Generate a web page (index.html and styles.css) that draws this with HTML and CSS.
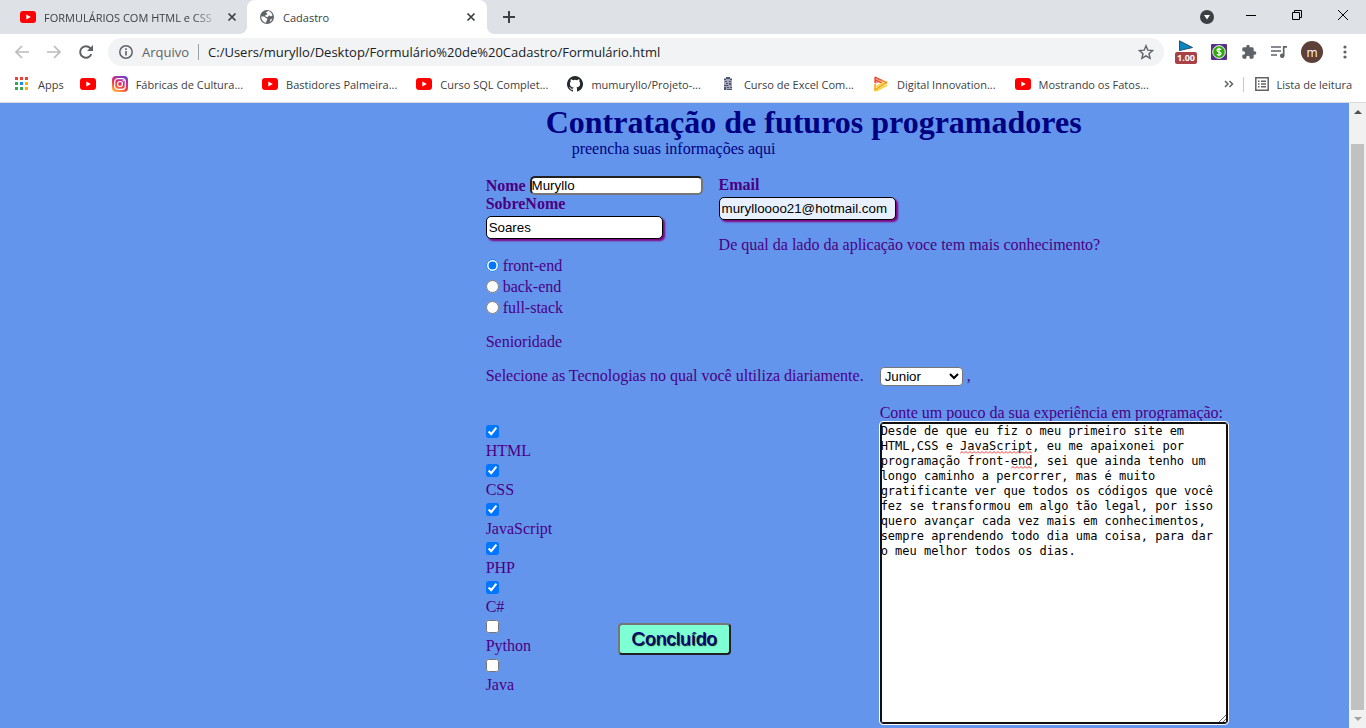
FILE: index.html
```html
<!DOCTYPE html>
<html lang="pt-BR">
<head>
<meta charset="utf-8">
<title>Cadastro</title>
<link rel="stylesheet" href="styles.css">
</head>
<body>
<svg class="defs" aria-hidden="true">
  <symbol id="youtube" viewBox="0 0 16 16"><rect y="2" width="16" height="12" rx="3" fill="#f00"/><path d="M6.3 5.4v5.2L10.8 8z" fill="#fff"/></symbol>
  <symbol id="cross" viewBox="0 0 10 10"><path d="M1.5 1.5l7 7m0-7l-7 7" stroke="#3c4043" stroke-width="1.7" fill="none"/></symbol>
</svg>

<header class="browser">
  <div class="tabbar">
    <div class="tab">
      <svg class="icon"><use href="#youtube"/></svg>
      <span class="tab-title faded">FORMULÁRIOS COM HTML e CSS</span>
      <button class="plain" aria-label="Fechar guia"><svg class="close"><use href="#cross"/></svg></button>
    </div>
    <div class="tab active">
      <svg class="icon" viewBox="0 0 16 16"><circle cx="8" cy="8" r="7" fill="#5f6368"/><path d="M2.2 7.4l3 .2 2 1.6 1 .2v1.8l-1 .9v1.6C4.500 13.300 2.300 11 2.200 7.400zM7 3.200l2.300-1.100c2 .5 3.600 2 4.200 4.100L12 7.400l-1.300-.8-1.200.5-.7 1.200-2.300-.8-.3-1.300 2.200-.6zM13.500 9.500c-.5 1.500-1.400 2.700-2.700 3.400l.3-2.200z" fill="#fff"/></svg>
      <span class="tab-title">Cadastro</span>
      <button class="plain" aria-label="Fechar guia"><svg class="close"><use href="#cross"/></svg></button>
    </div>
    <button class="plain new-tab" aria-label="Nova guia"><svg width="12" height="12" viewBox="0 0 12 12"><path d="M6 0v12M0 6h12" stroke="#3c4043" stroke-width="2"/></svg></button>
    <button class="plain tab-search" aria-label="Pesquisar guias"><svg width="14" height="14" viewBox="0 0 14 14"><circle cx="7" cy="7" r="7" fill="#3c4043"/><path d="M4 5h6L7 9.500z" fill="#fff"/></svg></button>
    <div class="window-controls">
      <button class="plain" aria-label="Minimizar"><svg width="10" height="12" viewBox="0 0 10 12"><path d="M0 6.500h10" stroke="#000"/></svg></button>
      <button class="plain" aria-label="Restaurar"><svg width="10" height="12" viewBox="0 0 10 12"><path d="M.5 3.500h7v7h-7zM2.500 3V1.500h7v7H8" fill="none" stroke="#000"/></svg></button>
      <button class="plain" aria-label="Fechar"><svg width="10" height="12" viewBox="0 0 10 12"><path d="M0 1l10 10M10 1L0 11" stroke="#000"/></svg></button>
    </div>
  </div>

  <div class="toolbar">
    <div class="nav">
      <button class="plain" aria-label="Voltar"><svg width="16" height="16" viewBox="0 0 16 16"><path d="M15 8H2M8 2L2 8l6 6" fill="none" stroke="#babcbe" stroke-width="1.700"/></svg></button>
      <button class="plain" aria-label="Avançar"><svg width="16" height="16" viewBox="0 0 16 16"><path d="M1 8h13M8 2l6 6-6 6" fill="none" stroke="#babcbe" stroke-width="1.700"/></svg></button>
      <button class="plain" aria-label="Recarregar"><svg width="16" height="16" viewBox="0 0 16 16"><path d="M13.300 10.200A5.800 5.800 0 1 1 12.200 4l1 1" fill="none" stroke="#5f6368" stroke-width="2"/><path d="M15 1v6H9z" fill="#5f6368"/></svg></button>
    </div>
    <div class="omnibox">
      <svg width="14" height="14" viewBox="0 0 14 14"><circle cx="7" cy="7" r="6.200" fill="none" stroke="#5f6368" stroke-width="1.500"/><path d="M7 6v4.500M7 3.300v1.600" stroke="#5f6368" stroke-width="1.600"/></svg>
      <label class="scheme" for="url">Arquivo</label>
      <input id="url" class="url" type="text" value="C:/Users/muryllo/Desktop/Formulário%20de%20Cadastro/Formulário.html">
      <button class="plain" aria-label="Favoritar"><svg width="16" height="16" viewBox="0 0 16 16"><path d="M8 1.800l1.800 4.400 4.800.4-3.600 3.100 1.100 4.600L8 11.800l-4.100 2.500L5 9.700 1.400 6.600l4.800-.4z" fill="none" stroke="#5f6368" stroke-width="1.400"/></svg></button>
    </div>
    <div class="extensions">
      <button class="plain speed" aria-label="Velocidade"><svg width="16" height="12" viewBox="0 0 16 12"><path d="M1.500.8v9.700l13-3z" fill="#0b86c1" stroke="#25516d"/></svg><span class="speed-badge">1.00</span></button>
      <button class="plain" aria-label="Cupons"><svg width="16" height="16" viewBox="0 0 16 16"><rect width="16" height="16" rx="1" fill="#55318a"/><circle cx="8" cy="8" r="6.300" fill="#31a80c" stroke="#fff"/><path d="M10 5.700C9.500 4.500 6 4.400 6 6.300c0 2 4 1.200 4 3.200 0 2-3.500 1.900-4 .6M8 3.700v8.600" fill="none" stroke="#fff" stroke-width="1.200"/></svg></button>
      <button class="plain" aria-label="Extensões"><svg width="16" height="16" viewBox="0 0 24 24"><path d="M20.500 11H19V7a2 2 0 0 0-2-2h-4V3.500a2.500 2.500 0 0 0-5 0V5H4a2 2 0 0 0-2 2v3.800h1.500a2.700 2.700 0 0 1 0 5.400H2V20a2 2 0 0 0 2 2h3.800v-1.500a2.700 2.700 0 0 1 5.400 0V22H17a2 2 0 0 0 2-2v-4h1.500a2.500 2.500 0 0 0 0-5z" fill="#5f6368"/></svg></button>
      <button class="plain" aria-label="Mídia"><svg width="16" height="14" viewBox="0 0 16 14"><path d="M0 2h10M0 6h10M0 10h6" stroke="#5f6368" stroke-width="1.700"/><path d="M12.700 10.500V1.800H16" fill="none" stroke="#5f6368" stroke-width="1.700"/><circle cx="11.200" cy="10.700" r="2.300" fill="#5f6368"/></svg></button>
      <button class="plain avatar" aria-label="Perfil">m</button>
      <button class="plain menu" aria-label="Menu"><svg width="4" height="14" viewBox="0 0 4 14"><g fill="#5f6368"><circle cx="2" cy="2" r="1.600"/><circle cx="2" cy="7" r="1.600"/><circle cx="2" cy="12" r="1.600"/></g></svg></button>
    </div>
  </div>

  <nav class="bookmarks">
    <a class="bookmark" href="#"><svg class="icon" viewBox="0 0 16 16"><path d="M1 1h3v3H1zM6 1h3v3H6zM11 1h3v3h-3z" fill="#ea4335"/><path d="M1 6h3v3H1zM1 11h3v3H1z" fill="#34a853"/><path d="M6 6h3v3H6z" fill="#1a8cf0"/><path d="M11 6h3v3h-3zM11 11h3v3h-3z" fill="#fbae05"/><path d="M6 11h3v3H6z" fill="#34a853"/></svg>Apps</a>
    <a class="bookmark" href="#" aria-label="YouTube"><svg class="icon"><use href="#youtube"/></svg></a>
    <a class="bookmark long" href="#"><svg class="icon" viewBox="0 0 16 16"><defs><linearGradient id="ig" x1=".2" y1="1" x2=".7" y2="0"><stop offset="0" stop-color="#fdc04a"/><stop offset=".4" stop-color="#f0433f"/><stop offset=".7" stop-color="#c32d92"/><stop offset="1" stop-color="#6a45cb"/></linearGradient></defs><rect width="16" height="16" rx="4" fill="url(#ig)"/><rect x="2.700" y="2.700" width="10.600" height="10.600" rx="3" fill="none" stroke="#fff" stroke-width="1.200"/><circle cx="8" cy="8" r="2.500" fill="none" stroke="#fff" stroke-width="1.200"/><circle cx="11.200" cy="4.800" r=".7" fill="#fff"/></svg>Fábricas de Cultura...</a>
    <a class="bookmark long" href="#"><svg class="icon"><use href="#youtube"/></svg>Bastidores Palmeira...</a>
    <a class="bookmark long" href="#"><svg class="icon"><use href="#youtube"/></svg>Curso SQL Complet...</a>
    <a class="bookmark long" href="#"><svg class="icon" viewBox="0 0 16 16"><path d="M8 0a8 8 0 0 0-2.530 15.590c.4.070.55-.17.55-.38v-1.490c-2.230.48-2.690-.95-2.690-.95-.36-.92-.89-1.170-.89-1.170-.73-.5.060-.49.060-.49.800.060 1.230.83 1.230.83.710 1.220 1.870.87 2.330.66.070-.52.280-.87.500-1.070-1.770-.2-3.640-.89-3.640-3.950 0-.87.310-1.590.82-2.150-.08-.2-.36-1.020.080-2.120 0 0 .67-.21 2.200.82a7.600 7.600 0 0 1 4 0c1.530-1.040 2.200-.82 2.200-.82.440 1.100.16 1.920.080 2.120.51.560.82 1.270.82 2.150 0 3.070-1.870 3.750-3.650 3.950.29.250.54.730.54 1.480v2.200c0 .21.150.46.550.38A8 8 0 0 0 8 0z" fill="#24292e"/></svg>mumuryllo/Projeto-...</a>
    <a class="bookmark long" href="#"><svg class="icon" viewBox="0 0 16 16"><path d="M4 2h8v12H4z" fill="#a2a8b9"/><path d="M6 1h4v2H6zM4 3h2v1H4zM10 3h2v1h-2zM5 5h2v1H5zM9 5h2v1H9zM6 7h2v1H6zM9 7h2v2H9zM4 9h4v1H4zM4 11h2v3H4zM7 11h2v1H7zM10 11h2v1h-2zM7 13h5v1H7z" fill="#4c5470"/></svg>Curso de Excel Com...</a>
    <a class="bookmark long" href="#"><svg class="icon" viewBox="0 0 16 16"><path d="M2 1l8 4-8 3z" fill="#f6a08c"/><path d="M2 1l8 4M2 4l7 3M2 7V1" stroke="#e4452f" stroke-width="1.300"/><path d="M14 6L2 14V8" fill="none" stroke="#f5a623" stroke-width="1.600"/><path d="M14 9L3 15M10 7L3 11" stroke="#fbd238" stroke-width="1.700"/><path d="M8 4l6 3" stroke="#f08a2c" stroke-width="1.500"/></svg>Digital Innovation...</a>
    <a class="bookmark long" href="#"><svg class="icon"><use href="#youtube"/></svg>Mostrando os Fatos...</a>
    <div class="bookmarks-end">
      <button class="plain" aria-label="Mais favoritos"><svg width="10" height="8" viewBox="0 0 10 8"><path d="M1 1l3 3-3 3M5.500 1l3 3-3 3" fill="none" stroke="#5f6368" stroke-width="1.500"/></svg></button>
      <a class="bookmark reading" href="#"><svg width="14" height="14" viewBox="0 0 14 14"><path d="M.8.8h12.400v12.400H.8z" fill="none" stroke="#5f6368" stroke-width="1.500"/><path d="M3 4.200h1.500M3 7h1.500M3 9.800h1.500M6 4.200h5M6 7h5M6 9.800h5" stroke="#5f6368" stroke-width="1.400"/></svg>Lista de leitura</a>
    </div>
  </nav>
</header>

<div class="viewport">
  <main class="page">
    <form class="form">
      <div class="heading">
        <h1>Contratação de futuros programadores</h1>
        <p class="subtitle">preencha suas informações aqui</p>
      </div>

      <div class="identity">
        <div>
          <div class="inline-field"><label for="nome"><b>Nome</b></label><input id="nome" class="first-name" type="text" value="Muryllo"></div>
          <label class="stacked" for="sobrenome"><b>SobreNome</b></label>
          <input id="sobrenome" class="shadowed" type="text" value="Soares">
        </div>
        <div>
          <label class="stacked" for="email"><b>Email</b></label>
          <input id="email" class="shadowed autofilled" type="email" value="murylloooo21@hotmail.com">
          <p class="question">De qual da lado da aplicação voce tem mais conhecimento?</p>
        </div>
      </div>

      <div class="radios">
        <label><input type="radio" name="lado" checked>front-end</label>
        <label><input type="radio" name="lado">back-end</label>
        <label><input type="radio" name="lado">full-stack</label>
      </div>

      <p class="seniority"><label for="senioridade">Senioridade</label></p>

      <div class="details">
        <div>
          <p class="prompt">Selecione as Tecnologias no qual você ultiliza diariamente.</p>
          <div class="skills">
            <div class="checks">
              <label><input type="checkbox" checked>HTML</label>
              <label><input type="checkbox" checked>CSS</label>
              <label><input type="checkbox" checked>JavaScript</label>
              <label><input type="checkbox" checked>PHP</label>
              <label><input type="checkbox" checked>C#</label>
              <label><input type="checkbox">Python</label>
              <label><input type="checkbox">Java</label>
            </div>
            <button class="submit" type="button">Concluído</button>
          </div>
        </div>
        <div>
          <div class="level"><select id="senioridade"><option>Junior</option><option>Pleno</option><option>Senior</option></select><span>,</span></div>
          <label class="stacked" for="experiencia">Conte um pouco da sua experiência em programação:</label>
          <div class="editor">
            <textarea id="experiencia" spellcheck="false">Desde de que eu fiz o meu primeiro site em HTML,CSS e JavaScript, eu me apaixonei por programação front-end, sei que ainda tenho um longo caminho a percorrer, mas é muito gratificante ver que todos os códigos que você fez se transformou em algo tão legal, por isso quero avançar cada vez mais em conhecimentos, sempre aprendendo todo dia uma coisa, para dar o meu melhor todos os dias.</textarea>
            <svg class="misspelling javascript" aria-hidden="true"><defs><pattern id="wave" width="4" height="3" patternUnits="userSpaceOnUse"><path d="M0 2.500l2-2 2 2" fill="none" stroke="#e33" stroke-width="1"/></pattern></defs><rect width="100%" height="3" fill="url(#wave)"/></svg>
            <svg class="misspelling end" aria-hidden="true"><rect width="100%" height="3" fill="url(#wave)"/></svg>
          </div>
        </div>
      </div>
    </form>
  </main>
  <div class="scrollbar" aria-hidden="true">
    <svg width="8" height="18" viewBox="0 0 8 18"><path d="M0 11h8L4 7z" fill="#505050"/></svg>
    <div class="track"><div class="thumb"></div></div>
    <svg width="8" height="18" viewBox="0 0 8 18"><path d="M0 7h8l-4 4z" fill="#a3a3a3"/></svg>
  </div>
</div>
</body>
</html>
```
FILE: styles.css
```css
* { box-sizing: border-box; }

body {
  margin: 0;
  height: 100vh;
  display: flex;
  flex-direction: column;
  overflow: hidden;
  font-family: "Liberation Serif", "Times New Roman", serif;
}

.defs { position: absolute; width: 0; height: 0; }
svg { display: block; flex: none; }
p, h1 { margin: 0; }

.plain {
  display: flex;
  align-items: center;
  justify-content: center;
  padding: 0;
  border: 0;
  background: none;
  font: inherit;
}

.icon { width: 16px; height: 16px; }

/* Browser frame */
.browser {
  flex: none;
  font-family: "Open Sans", "Noto Sans", sans-serif;
  font-size: 11px;
  color: #3c4043;
  background: #fff;
  border-bottom: 1px solid #d9dbde;
}

.tabbar { display: flex; height: 34px; background: #dee1e6; }

.tab {
  position: relative;
  display: flex;
  align-items: center;
  gap: 8px;
  width: 247px;
  padding: 0 10px 0 20px;
}

.tab.active {
  width: 240px;
  padding: 0 11px 0 12px;
  background: #fff;
  border-radius: 8px 8px 0 0;
}

.tab.active::before,
.tab.active::after {
  content: "";
  position: absolute;
  bottom: 0;
  width: 8px;
  height: 8px;
}
.tab.active::before { left: -8px; background: radial-gradient(circle at 0 0, #dee1e6 8px, #fff 8px); }
.tab.active::after { right: -8px; background: radial-gradient(circle at 100% 0, #dee1e6 8px, #fff 8px); }

.tab-title { flex: 1; min-width: 0; overflow: hidden; white-space: nowrap; }
.faded { mask-image: linear-gradient(90deg, #000 85%, transparent); }
.close { width: 10px; height: 10px; }
.new-tab { margin-left: 16px; }
.tab-search { margin-left: auto; }

.window-controls {
  display: flex;
  align-items: center;
  gap: 36px;
  padding: 0 18px 4px 32px;
}

.toolbar {
  display: flex;
  align-items: center;
  gap: 11px;
  height: 36px;
  padding: 0 19px 0 14px;
}

.nav { display: flex; gap: 16px; padding-right: 3px; }

.omnibox {
  flex: 1;
  display: flex;
  align-items: center;
  height: 28px;
  padding: 0 10px 0 11px;
  border-radius: 14px;
  background: #f1f3f4;
  font-size: 13px;
}

.scheme {
  margin-left: 9px;
  padding-right: 9px;
  border-right: 1px solid #9aa0a6;
  line-height: 16px;
  color: #5f6368;
}

.url {
  flex: 1;
  min-width: 0;
  padding: 0 0 0 9px;
  border: 0;
  background: none;
  font: inherit;
  color: #202124;
}

.extensions { display: flex; align-items: center; gap: 14px; }

.speed { flex-direction: column; width: 22px; height: 24px; justify-content: flex-start; }
.speed-badge {
  width: 22px;
  border-radius: 2px;
  background: #a94247;
  color: #fff;
  font-size: 9px;
  font-weight: 700;
  line-height: 12px;
}

.avatar {
  width: 22px;
  height: 22px;
  border-radius: 50%;
  background: #5d4037;
  color: #fff;
  font-size: 12px;
}

.menu { padding-left: 6px; }

.bookmarks {
  display: flex;
  align-items: center;
  gap: 16px;
  height: 32px;
  padding: 0 14px 4px;
}

.bookmark {
  display: flex;
  align-items: center;
  gap: 8px;
  color: #3c4043;
  white-space: nowrap;
  text-decoration: none;
}
.long { padding-right: 3px; }

.bookmarks-end { display: flex; align-items: center; gap: 9px; margin-left: auto; }
.reading { padding-left: 11px; border-left: 1px solid #c6c9cc; }

/* Page */
.viewport { flex: 1; min-height: 0; display: flex; }

.page {
  flex: 1;
  overflow: hidden;
  background: cornflowerblue;
  color: indigo;
}

.form {
  padding-left: 36%;
  font-size: 16px;
  line-height: 18px;
}

.heading { padding: 1px 0 0 60px; color: navy; }
.heading h1 { font-size: 32px; line-height: 36px; white-space: nowrap; }
.subtitle { padding-left: 26px; }

.identity { display: flex; gap: 16px; padding-top: 18px; }
.stacked { display: block; }

.inline-field { display: flex; align-items: center; gap: 4px; }

input, select { font-family: "Liberation Sans", Arial, sans-serif; color: #000; }

.first-name {
  width: 173px;
  height: 19px;
  padding: 0;
  border: 2px inset #767676;
  border-radius: 5px;
  background: #fff;
}

.shadowed {
  display: block;
  width: 177px;
  height: 23px;
  margin-top: 3px;
  padding: 0 2px;
  border: 1px solid #000;
  border-radius: 5px;
  background: #fff;
  box-shadow: 2px 2px 2px purple;
}
.autofilled { background: #e8f0fe; }

.question { padding-top: 16px; }

.radios { display: grid; line-height: 21px; padding-top: 1px; }
.radios label { display: flex; align-items: center; gap: 4px; }
input[type="radio"], input[type="checkbox"] { width: 13px; height: 13px; margin: 0; }

.seniority { padding-top: 15px; }

.details { display: flex; gap: 16px; padding-top: 16px; }
.prompt { white-space: nowrap; }
.skills { display: flex; align-items: flex-end; padding-top: 38px; }
.checks { display: grid; width: 132px; line-height: 18px; }
.checks label { display: grid; gap: 4px; padding: 2px 0; }

.submit {
  margin-bottom: 41px;
  width: 113px;
  height: 32px;
  padding: 0;
  border: 2px outset #767676;
  border-radius: 4px;
  background: aquamarine;
  color: navy;
  font-family: "Liberation Sans", Arial, sans-serif;
  font-size: 19px;
  text-shadow: 1px 1px 1px #000;
}

.level { display: flex; gap: 4px; padding-bottom: 18px; }
select {
  width: 83px;
  height: 19px;
  border: 1px solid #767676;
  border-radius: 4px;
  background: #fff;
}

.editor {
  position: relative;
  width: 348px;
  font-family: "DejaVu Sans Mono", monospace;
  font-size: 12px;
  line-height: 15px;
}

textarea {
  display: block;
  width: 100%;
  height: 302px;
  padding: 1px 6px 0 0;
  border: 1px solid #101010;
  border-radius: 3px;
  outline: 1px solid #fff;
  background: #fff;
  box-shadow: inset 0 0 0 1px #101010;
  color: #000;
  font: inherit;
}

.misspelling { position: absolute; height: 3px; }
.javascript { top: 29px; left: calc(1px + 11ch); width: 10ch; }
.end { top: 44px; left: calc(1px + 18ch); width: 3ch; }

.scrollbar {
  display: flex;
  flex-direction: column;
  align-items: center;
  width: 17px;
  background: #f1f1f1;
}
.track { flex: 1; width: 13px; padding-top: 23px; }
.thumb { height: 100%; background: #c1c1c1; }
```
